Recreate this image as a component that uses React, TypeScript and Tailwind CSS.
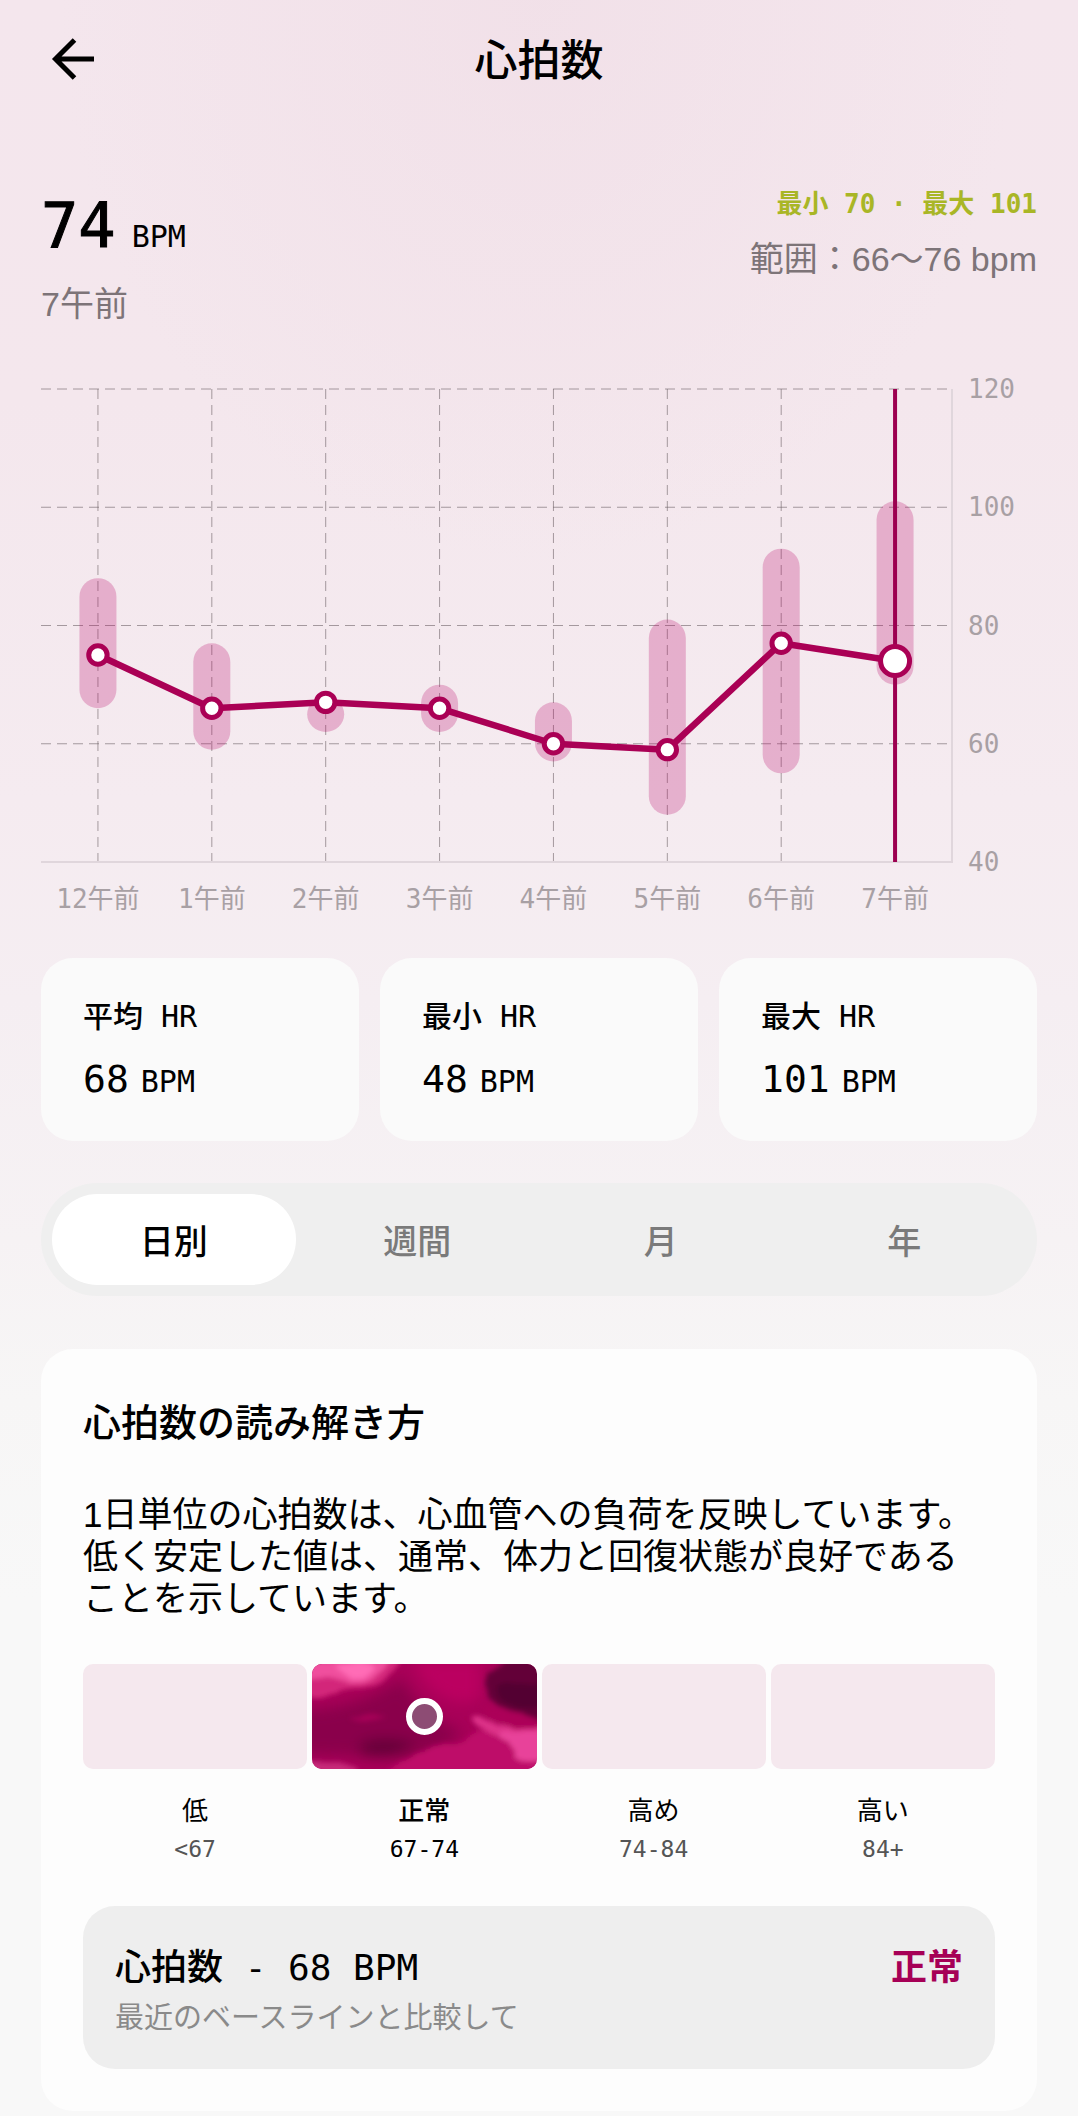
import { useState } from "react";

const readings = [
  { label: "12午前", min: 66, max: 88, avg: 75 },
  { label: "1午前", min: 59, max: 77, avg: 66 },
  { label: "2午前", min: 62, max: 68, avg: 67 },
  { label: "3午前", min: 62, max: 70, avg: 66 },
  { label: "4午前", min: 57, max: 67, avg: 60 },
  { label: "5午前", min: 48, max: 81, avg: 59 },
  { label: "6午前", min: 55, max: 93, avg: 77 },
  { label: "7午前", min: 70, max: 101, avg: 74 },
];

const stats = [
  { label: "平均 HR", value: 68 },
  { label: "最小 HR", value: 48 },
  { label: "最大 HR", value: 101 },
];

const ranges = [
  { name: "低", range: "<67" },
  { name: "正常", range: "67-74" },
  { name: "高め", range: "74-84" },
  { name: "高い", range: "84+" },
];

const tabs = ["日別", "週間", "月", "年"];

const ticks = [120, 100, 80, 60, 40];

const WIDTH = 911;
const HEIGHT = 473;
const STEP = WIDTH / readings.length;

const xAt = (i: number) => STEP * i + STEP / 2;
const yAt = (bpm: number) => ((120 - bpm) / 80) * HEIGHT;

function HeartRateChart({ selected }: { selected: number }) {
  const points = readings.map((r, i) => `${xAt(i)},${yAt(r.avg)}`).join(" ");

  return (
    <svg viewBox={`0 0 ${WIDTH} ${HEIGHT}`} className="block min-w-0 flex-1 overflow-visible" role="img" aria-label="心拍数">
      {/* Grid */}
      <g stroke="#6e6268" strokeOpacity="0.6" strokeWidth="1" strokeDasharray="10 6">
        {ticks.slice(0, 4).map((t) => (
          <line key={t} x1="0" x2={WIDTH - 4} y1={yAt(t)} y2={yAt(t)} />
        ))}
        {readings.map((r, i) => (
          <line key={r.label} x1={xAt(i)} x2={xAt(i)} y1="0" y2={HEIGHT} />
        ))}
      </g>
      <path d={`M0 ${HEIGHT}H${WIDTH}V0`} fill="none" stroke="#e0d6dc" strokeWidth="2" />

      {/* Min / max range */}
      {readings.map((r, i) => (
        <rect
          key={r.label}
          x={xAt(i) - 18.5}
          y={yAt(r.max)}
          width="37"
          height={yAt(r.min) - yAt(r.max)}
          rx="18.5"
          fill="#b80062"
          fillOpacity="0.25"
        />
      ))}

      <line x1={xAt(selected)} x2={xAt(selected)} y1="0" y2={HEIGHT} stroke="#9c0050" strokeWidth="4" />
      <polyline points={points} fill="none" stroke="#aa0055" strokeWidth="6.5" strokeLinejoin="round" />
      {readings.map((r, i) => (
        <circle
          key={r.label}
          cx={xAt(i)}
          cy={yAt(r.avg)}
          r={i === selected ? 14.5 : 9.2}
          fill="#fff"
          stroke="#aa0055"
          strokeWidth="5"
        />
      ))}
    </svg>
  );
}

function MarbleSwatch() {
  return (
    <svg viewBox="0 0 224 105" preserveAspectRatio="none" className="absolute inset-0 h-full w-full" aria-hidden="true">
      <defs>
        <filter id="soft" x="-20%" y="-20%" width="140%" height="140%">
          <feTurbulence type="fractalNoise" baseFrequency="0.03 0.06" numOctaves="4" seed="7" result="noise" />
          <feDisplacementMap in="SourceGraphic" in2="noise" scale="8" xChannelSelector="R" yChannelSelector="G" result="bent" />
          <feGaussianBlur in="bent" stdDeviation="2.6" />
        </filter>
        <filter id="haze" x="-40%" y="-40%" width="180%" height="180%">
          <feGaussianBlur stdDeviation="7" />
        </filter>
      </defs>
      <rect width="224" height="105" fill="#a80058" />
      <g filter="url(#haze)">
        <path d="M-20 46C20 48 60 36 90 14C98 30 118 60 150 66C140 84 110 92 80 94C40 92 10 90 -20 90Z" fill="#8a004b" />
        <path d="M48 80C64 72 86 74 104 80C92 92 66 96 48 90Z" fill="#640039" />
        <path d="M100 -4H168V34C150 46 116 36 100 -4Z" fill="#bb0060" />
      </g>
      <g filter="url(#soft)">
        <path d="M-10 -10H90C86 2 84 12 66 20C48 26 26 26 14 32C6 34 -2 34 -10 32Z" fill="#d3287a" />
        <path d="M-10 0C14 -4 60 -6 78 -6C74 8 66 17 48 18C36 20 26 14 14 13C6 12 -2 16 -10 18Z" fill="#f04f9e" />
        <path d="M24 2C38 -2 56 -2 64 4C62 14 46 17 36 12Z" fill="#ff6cb6" />
        <path d="M174 14C182 2 204 -10 240 -10V64C222 64 212 54 202 48C190 42 168 34 174 14Z" fill="#640038" />
        <path d="M184 22C196 12 212 24 240 20C240 34 230 46 214 44C200 42 184 36 184 22Z" fill="#520030" />
        <path d="M168 40C188 38 204 52 240 60V76C214 74 184 66 168 40Z" fill="#ac0058" />
        <path d="M38 54C52 48 66 50 74 54C64 58 50 58 38 54Z" fill="#a80459" />
        <path d="M78 106C96 92 118 82 140 80C152 78 158 68 168 66C192 68 220 72 240 80V120H70Z" fill="#be0f69" />
        <path d="M158 54C168 50 178 54 184 62C196 66 212 62 240 64V78C230 86 224 82 212 80C190 78 172 68 158 54Z" fill="#dd3388" />
        <path d="M186 72C202 64 220 68 240 68V92C226 100 210 98 202 94C206 86 196 80 186 72Z" fill="#e8439a" />
        <path d="M-10 100C10 92 30 98 44 104V120H-10Z" fill="#c62a79" />
      </g>
    </svg>
  );
}

export default function App() {
  const [activeTab, setActiveTab] = useState("日別");

  return (
    <div className="min-h-screen bg-[#f8f8f8] bg-[radial-gradient(ellipse_480px_560px_at_50%_0,#efdbe480,#efdbe400),linear-gradient(to_bottom,#f4e6ed_0,#f4e7ed_400px,#f5ebf0_800px,#f5eef2_1000px,#f6f2f4_1240px,#f7f6f6_1400px,#f8f8f8_1600px)] bg-no-repeat px-[41px] pb-[5px] font-['Liberation_Sans','Noto_Sans_CJK_JP',sans-serif] text-black">
      <header className="grid h-[118px] grid-cols-[64px_1fr_64px] items-center">
        <button type="button" aria-label="戻る" className="flex h-16 w-16 items-center justify-center">
          <svg viewBox="0 0 44 44" className="h-11 w-11" fill="none" stroke="currentColor" strokeWidth="5">
            <path d="M23.500 3L4.500 22L23.500 41M5 22H43" />
          </svg>
        </button>
        <h1 className="pt-1 text-center text-[43px] leading-[60px] font-medium">心拍数</h1>
      </header>

      <section className="mt-[66px] flex justify-between">
        <div>
          <p className="flex items-baseline gap-4 pt-[2px] font-['DejaVu_Sans_Mono','Noto_Sans_CJK_JP',monospace]">
            <span className="text-[62px] leading-[80px] [-webkit-text-stroke:1px_black]">74</span>
            <span className="text-[30px]">BPM</span>
          </p>
          <p className="mt-[14px] text-[34px] leading-[48px] text-[#7d7478]">7午前</p>
        </div>
        <div className="text-right">
          <p className="font-['DejaVu_Sans_Mono','Noto_Sans_CJK_JP',monospace] text-[26px] leading-[40px] font-bold text-[#a9b626]">
            最小 70 · 最大 101
          </p>
          <p className="mt-[11px] text-[34px] leading-[48px] text-[#7d7478]">範囲：66〜76 bpm</p>
        </div>
      </section>

      <section className="mt-[61px] font-['DejaVu_Sans_Mono','Noto_Sans_CJK_JP',monospace] text-[26px] leading-[36px] text-[#a8a0a4]">
        <div className="flex">
          <HeartRateChart selected={7} />
          <ul className="-my-[18px] flex w-[85px] flex-col justify-between pl-4">
            {ticks.map((t) => (
              <li key={t}>{t}</li>
            ))}
          </ul>
        </div>
        <ul className="mt-[19px] mr-[85px] grid grid-cols-8 text-center">
          {readings.map((r) => (
            <li key={r.label} className="whitespace-nowrap">{r.label}</li>
          ))}
        </ul>
      </section>

      <section className="mt-[41px] grid grid-cols-3 gap-[21px] font-['DejaVu_Sans_Mono','Noto_Sans_CJK_JP',monospace]">
        {stats.map((stat) => (
          <div key={stat.label} className="rounded-[32px] bg-[#fafafa] px-[42px] pt-[37px] pb-[36px]">
            <h2 className="text-[30px] leading-[44px] font-medium">{stat.label}</h2>
            <p className="mt-[14px] flex items-baseline gap-3 leading-[52px]">
              <span className="text-[38px]">{stat.value}</span>
              <span className="text-[30px] leading-[40px]">BPM</span>
            </p>
          </div>
        ))}
      </section>

      <div role="tablist" className="mt-[42px] grid grid-cols-4 rounded-full bg-[#efefef] p-[11px]">
        {tabs.map((tab) => (
          <button
            key={tab}
            type="button"
            role="tab"
            aria-selected={tab === activeTab}
            onClick={() => setActiveTab(tab)}
            className={`h-[91px] rounded-full pt-[5px] text-[34px] font-medium ${tab === activeTab ? "bg-white text-black" : "text-[#7a7a7a]"}`}
          >
            {tab}
          </button>
        ))}
      </div>

      <section className="mt-[53px] rounded-[32px] bg-[#fdfdfd] px-[42px] pt-[46px] pb-[42px]">
        <h2 className="text-[38px] leading-[56px] font-medium">心拍数の読み解き方</h2>
        <p className="mt-[43px] pr-2 text-[35px] leading-[42px]">
          1日単位の心拍数は、心血管への負荷を反映しています。低く安定した値は、通常、体力と回復状態が良好であることを示しています。
        </p>

        <ul className="mt-[44px] grid grid-cols-4 gap-x-[5px] text-center font-['DejaVu_Sans_Mono','Noto_Sans_CJK_JP',monospace]">
          {ranges.map((r) => {
            const active = r.name === "正常";
            return (
              <li key={r.name}>
                <div className="relative flex h-[105px] items-center justify-center overflow-hidden rounded-[10px] bg-[#f5e8ee]">
                  {active && <MarbleSwatch />}
                  {active && <span className="relative h-[37px] w-[37px] rounded-full border-[6px] border-white bg-[#8d4c74]" />}
                </div>
                <p className={`mt-[23px] text-[26px] leading-[38px] ${active ? "font-medium" : ""}`}>{r.name}</p>
                <p className={`mt-[3px] text-[23px] leading-[32px] ${active ? "text-black" : "text-[#555555]"}`}>{r.range}</p>
              </li>
            );
          })}
        </ul>

        <div className="mt-[41px] flex items-start justify-between rounded-[32px] bg-[#eeeeee] px-[32px] pt-[36px] pb-[30px]">
          <div>
            <h3 className="font-['DejaVu_Sans_Mono','Noto_Sans_CJK_JP',monospace] text-[36px] leading-[52px] font-medium">
              心拍数 - 68 BPM
            </h3>
            <p className="mt-[4px] text-[29px] leading-[41px] text-[#8a8a8a]">最近のベースラインと比較して</p>
          </div>
          <strong className="text-[36px] leading-[52px] font-bold text-[#a60056]">正常</strong>
        </div>
      </section>
    </div>
  );
}
